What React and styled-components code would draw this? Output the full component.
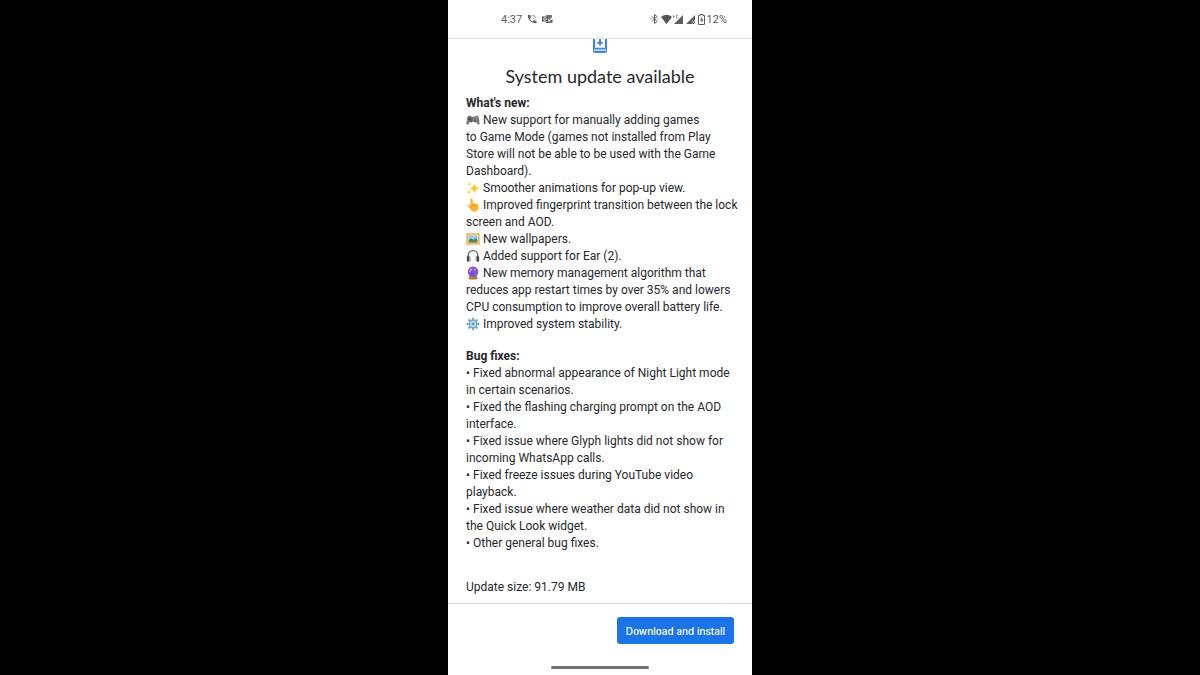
import React from "react";
import styled, { createGlobalStyle } from "styled-components";

const GlobalStyle = createGlobalStyle`
  * { box-sizing: border-box; }
  body {
    margin: 0;
    background: #000;
    color: #27282b;
    font-family: Roboto, "Liberation Sans", sans-serif;
    font-size: 12px;
    line-height: 17px;
  }
`;

const Stage = styled.div`
  display: flex;
  justify-content: center;
  min-height: 100vh;
`;

const Phone = styled.div`
  display: flex;
  flex-direction: column;
  width: 100%;
  max-width: 304px;
  background: #fff;
`;

const StatusBar = styled.header`
  display: flex;
  align-items: center;
  justify-content: space-between;
  height: 39px;
  padding: 0 25px 0 53px;
  border-bottom: 1px solid #dfe0e2;
  color: #5c5c5c;
  font-size: 11px;
`;

const StatusGroup = styled.div`
  display: flex;
  align-items: center;
  gap: ${(p) => p.$gap};
`;

const Content = styled.main`
  flex: 1;
  padding: 0 18px 7px;
  overflow: hidden;
`;

const UpdateIcon = styled.svg`
  display: block;
  width: 20px;
  height: 20px;
  margin: -4px auto 0;
`;

const Title = styled.h1`
  margin: 9px 0 7px;
  color: #27282b;
  font-family: Lato, Roboto, sans-serif;
  font-size: 18px;
  font-weight: 400;
  line-height: 24px;
  text-align: center;
  white-space: nowrap;
`;

const Section = styled.section`
  margin-bottom: ${(p) => p.$after};
`;

const Heading = styled.h2`
  margin: 0;
  font-size: 12px;
  font-weight: 700;
  line-height: 17px;
`;

const List = styled.ul`
  margin: 0;
  padding: 0;
  list-style: none;
`;

const Item = styled.li`
  white-space: pre;
`;

const Emoji = styled.svg`
  width: 14px;
  height: 14px;
  margin-right: 3px;
  vertical-align: -3px;
`;

const Size = styled.p`
  margin: 0;
`;

const Footer = styled.footer`
  display: flex;
  flex-direction: column;
  align-items: center;
  height: 72px;
  padding: 13px 18px 6px;
  border-top: 1px solid #dfe0e2;
`;

const InstallButton = styled.button`
  align-self: flex-end;
  height: 27px;
  padding: 0 9px;
  border: 0;
  border-radius: 3px;
  background: #1b73e8;
  color: #fff;
  font-family: Inter, Roboto, sans-serif;
  font-size: 10px;
  font-weight: 500;
  white-space: nowrap;
`;

const HomeBar = styled.div`
  width: 98px;
  height: 3px;
  margin-top: auto;
  border-radius: 2px;
  background: #707070;
`;

const emojis = {
  game: (
    <>
      <path d="M3.2 3.2h2.2l.8 1h3.6l.8-1h2.2c1.2.2 1.7 1.8 2.2 4.4.6 2.900.7 5.400-.4 5.700-1 .3-2-1.300-3.100-3.300h-7C3.400 12 2.400 13.600 1.400 13.300.300 13 .400 10.500 1 7.600c.500-2.600 1-4.200 2.200-4.400z" fill="#77797d" />
      <path d="M4.500 5v3.600M2.700 6.800h3.600" stroke="#3d4045" strokeWidth="1.200" />
      <circle cx="5.800" cy="9.500" r="1.300" fill="#55585d" />
      <circle cx="10.200" cy="9.500" r="1.300" fill="#55585d" />
      <circle cx="11.500" cy="5.300" r=".7" fill="#e5b84f" />
      <circle cx="12.900" cy="6.700" r=".7" fill="#d85d5d" />
      <circle cx="10.200" cy="6.700" r=".7" fill="#5b93cc" />
      <circle cx="11.500" cy="8.100" r=".7" fill="#66a978" />
    </>
  ),
  sparkle: (
    <>
      <path d="M9.500 2.500q.8 5 5.800 6-5 1-5.800 6-.8-5-5.800-6 5-1 5.800-6z" fill="#fcc934" />
      <path d="M4 .8q.3 2.200 2.500 2.700Q4.300 4 4 6.200 3.700 4 1.500 3.500 3.700 3 4 .8zM3.300 10q.3 2.200 2.500 2.700-2.200.5-2.500 2.700-.3-2.200-2.500-2.700 2.200-.5 2.500-2.700z" fill="#fdd663" />
    </>
  ),
  finger: (
    <>
      <path d="M5 1.700C5 .3 7.500.3 7.600 1.700L8 6.400c.6-.6 1.900-.5 2.200.3.700-.5 1.800-.2 2 .6.800-.3 1.900.2 1.900 1.200v3c0 2.300-1.700 4-4.500 4-2.700 0-3.900-1.100-5-3L2 8.900c-.7-1.300.7-2 1.600-1.100L5 9.300z" fill="#fbb52d" />
      <path d="M8 6.500v3M10.200 6.800v2.900M12.200 7.500v2.400M5 9.200l1.700 1.600" fill="none" stroke="#e68a1b" strokeWidth=".7" />
    </>
  ),
  picture: (
    <>
      <path fill="#eda33c" d="M.5 1.500h15v13H.5z" />
      <path fill="#fff1c9" d="M2 3h12v10H2z" />
      <path fill="#74c3ed" d="M3 4h10v8H3z" />
      <path fill="#e9f8ff" d="M4 6.200h4v1H4zM8 5h3v1H8z" />
      <path fill="#4c7a58" d="M3 10l3-3 2.500 2.500L11 7l2 2v3H3z" />
      <path fill="#b8924d" d="M3 11h10v1H3z" />
    </>
  ),
  headphones: (
    <>
      <path d="M2.500 11V7.300C2.500 4 5 1.800 8 1.800S13.500 4 13.500 7.300V11" fill="none" stroke="#606468" strokeWidth="1.500" />
      <rect x="1" y="8" width="3" height="6.500" rx="1.400" fill="#45494d" />
      <rect x="12" y="8" width="3" height="6.500" rx="1.400" fill="#45494d" />
      <path d="M4 8.500h1.200v5.600H4zM10.800 8.500H12v5.600h-1.200z" fill="#9ca0a5" />
    </>
  ),
  crystal: (
    <>
      <path d="M4 11h8l1.500 3.500q-5.500 2-11 0z" fill="#a1663c" />
      <path d="M3.500 13h9v1h-9z" fill="#dba43d" />
      <circle cx="8" cy="6.500" r="6" fill="#8550c8" />
      <path d="M3.200 6.500c1-3 3-4.300 5.500-4-2.200.8-1.500 2.200-3 3S4.500 8 3.200 6.500z" fill="#e0a5f5" />
      <path d="M8 9c2-.6 2-3.500 4.500-3.500C13 9 10.500 11 8 11z" fill="#5277dc" />
      <circle cx="10.200" cy="4.200" r="1" fill="#d8bbff" />
    </>
  ),
  gear: (
    <>
      <g stroke="#6ea3bd" strokeWidth="2.200">
        <path d="M8 .8v14.400M.8 8h14.400M2.900 2.900l10.200 10.200M13.100 2.900L2.900 13.100" />
      </g>
      <circle cx="8" cy="8" r="5.300" fill="#78adc6" />
      <circle cx="8" cy="8" r="3.300" fill="#c8e3ef" />
      <circle cx="8" cy="8" r="1.700" fill="#5f93af" />
    </>
  ),
};

const features = [
  ["game", "New support for manually adding games\nto Game Mode (games not installed from Play\nStore will not be able to be used with the Game\nDashboard)."],
  ["sparkle", "Smoother animations for pop-up view."],
  ["finger", "Improved fingerprint transition between the lock\nscreen and AOD."],
  ["picture", "New wallpapers."],
  ["headphones", "Added support for Ear (2)."],
  ["crystal", "New memory management algorithm that\nreduces app restart times by over 35% and lowers\nCPU consumption to improve overall battery life."],
  ["gear", "Improved system stability."],
];

const fixes = [
  "Fixed abnormal appearance of Night Light mode\nin certain scenarios.",
  "Fixed the flashing charging prompt on the AOD\ninterface.",
  "Fixed issue where Glyph lights did not show for\nincoming WhatsApp calls.",
  "Fixed freeze issues during YouTube video\nplayback.",
  "Fixed issue where weather data did not show in\nthe Quick Look widget.",
  "Other general bug fixes.",
];

function WifiCallIcon() {
  return (
    <svg width="10" height="10" viewBox="0 0 20 20" aria-hidden="true">
      <path d="M2 2h5l1 5-2.500 2c1.500 3 3 4.500 6 6l2-2.500 5.500 1v5C9 19 1 11 2 2z" fill="#5c5c5c" />
      <path d="M10 3.500q5-2 8 4M11 8q2.500-1 4 2.500" fill="none" stroke="#808080" strokeWidth="1.800" />
    </svg>
  );
}

function OutlookIcon() {
  return (
    <svg width="11" height="10" viewBox="0 0 22 20" aria-hidden="true">
      <path d="M8 2h12v5l-5 4-4-3H8zM12 13l3 2 6-5v8H8v-3h4z" fill="#777" />
      <path d="M0 5h12v10H0z" fill="#555" />
      <circle cx="6" cy="10" r="2.800" fill="none" stroke="#fff" strokeWidth="1.600" />
      <path d="M13 8l7 8" stroke="#555" strokeWidth="1.500" />
    </svg>
  );
}

function BluetoothIcon() {
  return (
    <svg width="9" height="10" viewBox="0 0 18 20" aria-hidden="true">
      <path d="M4 5l10 10-5 4V1l5 4L4 15M1 10h2M15 10h2" fill="none" stroke="#5c5c5c" strokeWidth="2" />
    </svg>
  );
}

function SignalIcons() {
  return (
    <svg width="35" height="11" viewBox="0 0 35 11" aria-hidden="true">
      <path d="M0 3q5.500-4.500 11 0L5.500 10z" fill="#555" />
      <path d="M22 1v9h-9zM34 1v9h-9z" fill="#5c5c5c" />
      <path d="M12.500 1v3M12 2.500h2M15 1h2M15.500 1v3h2" fill="none" stroke="#888" strokeWidth=".8" />
      <path d="M31 6l3 4M34 6l-3 4" stroke="#bbb" strokeWidth="1" />
    </svg>
  );
}

function BatteryIcon() {
  return (
    <svg width="7" height="11" viewBox="0 0 14 22" aria-hidden="true">
      <path d="M4 1h6v2h3v18H1V3h3z" fill="none" stroke="#5c5c5c" strokeWidth="2" />
      <path d="M8 6l-4 7h3v5l4-7H8z" fill="#5c5c5c" />
    </svg>
  );
}

export default function App() {
  return (
    <>
      <GlobalStyle />
      <Stage>
        <Phone>
          <StatusBar>
            <StatusGroup $gap="5px">
              <span>4:37</span>
              <WifiCallIcon />
              <OutlookIcon />
            </StatusGroup>
            <StatusGroup $gap="2px">
              <BluetoothIcon />
              <SignalIcons />
              <BatteryIcon />
              <span>12%</span>
            </StatusGroup>
          </StatusBar>
          <Content>
            <UpdateIcon viewBox="0 0 20 20" aria-hidden="true">
              <rect x="4" y="0" width="12" height="17" rx="1" fill="none" stroke="#4381e8" strokeWidth="2" />
              <path d="M4 14h12v2H4z" fill="#c3d7f9" />
              <path d="M4 13.500h12" stroke="#4381e8" strokeWidth="1.500" />
              <path d="M10 3v5" stroke="#4381e8" strokeWidth="2" />
              <path d="M6.500 7h7L10 10.800z" fill="#4381e8" />
            </UpdateIcon>
            <Title>System update available</Title>
            <Section $after="15px">
              <Heading>What's new:</Heading>
              <List>
                {features.map(([icon, text]) => (
                  <Item key={icon}>
                    <Emoji viewBox="0 0 16 16" aria-hidden="true">{emojis[icon]}</Emoji>
                    {text}
                  </Item>
                ))}
              </List>
            </Section>
            <Section $after="27px">
              <Heading>Bug fixes:</Heading>
              <List>
                {fixes.map((text) => (
                  <Item key={text}>{`• ${text}`}</Item>
                ))}
              </List>
            </Section>
            <Size>Update size: 91.79 MB</Size>
          </Content>
          <Footer>
            <InstallButton type="button">Download and install</InstallButton>
            <HomeBar />
          </Footer>
        </Phone>
      </Stage>
    </>
  );
}
